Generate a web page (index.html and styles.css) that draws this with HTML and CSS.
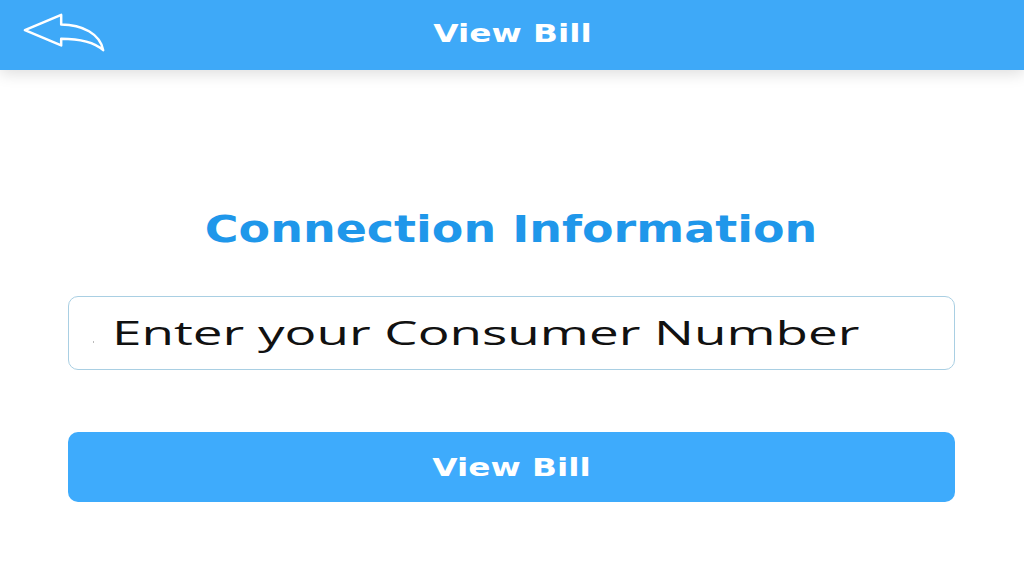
FILE: index.html
```html
<!DOCTYPE html>
<html>
<head>
<meta charset="utf-8">
<link rel="stylesheet" href="styles.css">
</head>
<body>
<header class="topbar">
  <span class="back">
    <svg width="86" height="42" viewBox="22 12 90 44">
      <path d="M25 31 L63 15 L63 25 C85 25 104 35 107 52 C98 44 85 40 63 40 L63 47 Z" fill="none" stroke="#fff" stroke-width="2.6" stroke-linejoin="round"/>
    </svg>
  </span>
  <span class="title">View Bill</span>
</header>
<main class="content">
  <h1 class="heading"><span class="stretch-h">Connection Information</span></h1>
  <div class="field">
    <span class="cursor"></span>
    <span class="placeholder">Enter your Consumer Number</span>
  </div>
  <button class="btn"><span class="stretch-b">View Bill</span></button>
</main>
</body>
</html>
```
FILE: styles.css
```css
html, body {
  margin: 0;
  padding: 0;
  background: #ffffff;
  width: 1024px;
  height: 576px;
  overflow: hidden;
}
.topbar {
  height: 70px;
  background: #3ea9f8;
  display: flex;
  align-items: center;
  justify-content: center;
  position: relative;
  box-shadow: 0 4px 14px rgba(0, 0, 0, 0.13);
}
.back {
  position: absolute;
  left: 22px;
  top: 12px;
  display: block;
  line-height: 0;
}
.title {
  display: inline-block;
  color: #ffffff;
  font-family: "DejaVu Sans", sans-serif;
  font-weight: bold;
  font-size: 25px;
  transform: scaleX(1.31);
  margin-top: -3px;
}
.content {
  padding: 0 69px 0 68px;
  display: flex;
  flex-direction: column;
}
.heading {
  margin: 137px 0 0;
  height: 44px;
  text-align: center;
  font-family: "DejaVu Sans", sans-serif;
  font-weight: bold;
  font-size: 38px;
  line-height: 44px;
  color: #1f97ea;
}
.stretch-h {
  display: inline-block;
  transform: scaleX(1.21);
}
.field {
  margin-top: 45px;
  height: 72px;
  border: 1px solid #a9cfe3;
  border-radius: 10px;
  display: flex;
  align-items: center;
  padding-left: 24px;
  position: relative;
}
.cursor {
  position: absolute;
  left: 24px;
  top: 44px;
  width: 1px;
  height: 2px;
  background: #bbbbbb;
}
.placeholder {
  display: inline-block;
  font-family: "Open Sans", sans-serif;
  font-size: 32px;
  color: #111111;
  transform: scaleX(1.656);
  transform-origin: left center;
  margin-left: 19px;
  margin-top: -2px;
  white-space: nowrap;
}
.btn {
  margin-top: 62px;
  height: 70px;
  border: none;
  border-radius: 10px;
  background: #3eabfc;
  color: #ffffff;
  font-family: "DejaVu Sans", sans-serif;
  font-weight: bold;
  font-size: 25px;
  display: flex;
  align-items: center;
  justify-content: center;
  padding: 0;
}
.stretch-b {
  display: inline-block;
  transform: scaleX(1.31);
}
```
